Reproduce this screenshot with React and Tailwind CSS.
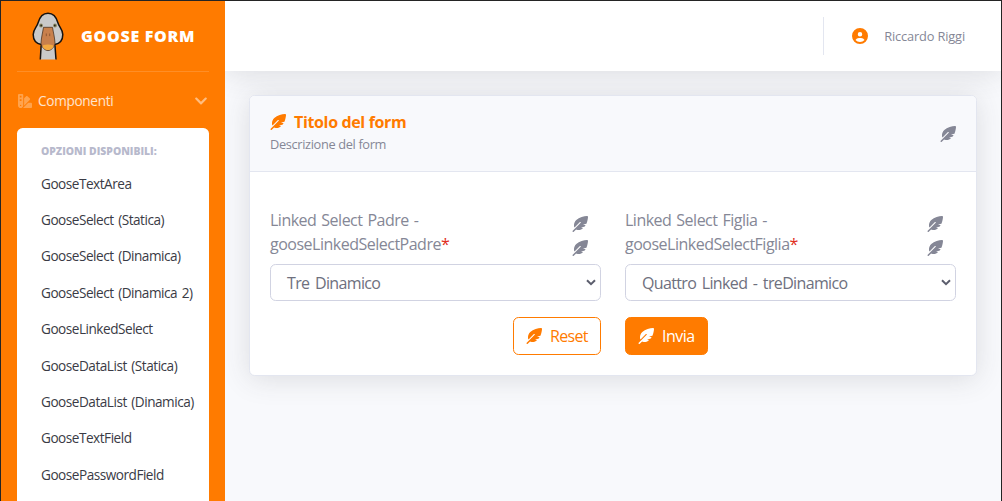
import { FaFeatherPointed, FaSwatchbook, FaCircleUser } from "react-icons/fa6";
import { FaChevronDown } from "react-icons/fa";

const options = [
  "GooseTextArea",
  "GooseSelect (Statica)",
  "GooseSelect (Dinamica)",
  "GooseSelect (Dinamica 2)",
  "GooseLinkedSelect",
  "GooseDataList (Statica)",
  "GooseDataList (Dinamica)",
  "GooseTextField",
  "GoosePasswordField",
];

function Goose() {
  return (
    <svg width="32" height="48" viewBox="0 0 32 48" className="shrink-0">
      <path
        d="M8.300 47.500 9.200 32.500C4 31.500 1.200 27.500 1.200 22.500 1.200 17.500 4.700 15.500 6 11 7.600 5 10.500 1.200 16 1.200S24.400 5 26 11c1.300 4.500 4.800 6.500 4.800 11.500 0 5-2.800 9-7.900 10L24 47.500"
        fill="#c9c9c9"
        stroke="#17120f"
        strokeWidth="1.500"
      />
      <path d="M11.500 15.300h9c.8 5 2.200 10 2.500 16-.5 3.800-3.900 7.300-7 7.300s-6.500-3.500-7-7.300c.3-6 1.700-11 2.500-16z" fill="#c8804c" stroke="#3a2617" strokeWidth=".7" />
      <path d="M16 32.400c3.600 0 5.500.9 5.500 1.600 0 1.800-3 4.100-5.500 4.100s-5.500-2.300-5.500-4.100c0-.7 1.900-1.600 5.500-1.600z" fill="#f3aa41" />
      <path d="M14.300 21.500v2.600M17.700 21.500v2.600" stroke="#8a5230" strokeWidth=".9" />
      <circle cx="9" cy="13.500" r="1.900" fill="#8d8a63" />
      <circle cx="23" cy="13.500" r="1.900" fill="#8d8a63" />
      <circle cx="9.200" cy="13.500" r=".9" fill="#2c2920" />
      <circle cx="22.800" cy="13.500" r=".9" fill="#2c2920" />
    </svg>
  );
}

function Sidebar() {
  return (
    <aside className="relative z-10 flex h-[500px] w-56 shrink-0 flex-col overflow-hidden bg-[#ff7b00] px-4">
      <div className="flex h-[70px] shrink-0 items-center pl-[15px]">
        <Goose />
        <span className="ml-[17px] whitespace-nowrap text-base font-extrabold tracking-[0.7px] text-white">GOOSE FORM</span>
      </div>
      <div className="h-px shrink-0 bg-white/15" />
      <div className="flex h-14 shrink-0 items-center pt-[2px]">
        <FaSwatchbook className="mr-[6px] ml-px size-[14px] text-white/30" />
        <span className="text-[13.600px] tracking-[-0.300px] text-white/80">Componenti</span>
        <FaChevronDown className="ml-auto mr-[1px] size-[14px] text-white/50" />
      </div>
      <div className="h-[420px] shrink-0 rounded-[5.600px] bg-white px-6 pt-[13.600px]">
        <h6 className="mb-[6px] whitespace-nowrap text-[10.400px] leading-[18px] font-extrabold text-[#b7b9cc]">
          OPZIONI DISPONIBILI:
        </h6>
        <ul>
          {options.map((name) => (
            <li
              key={name}
              className="flex h-[36.400px] items-center whitespace-nowrap text-[13.600px] tracking-[-0.480px] text-[#3a3b45] [word-spacing:1.500px]"
            >
              {name}
            </li>
          ))}
        </ul>
      </div>
    </aside>
  );
}

function SelectField({ label, name, value }) {
  return (
    <div>
      <div className="flex h-12 justify-between text-base leading-6 text-[#858796]">
        <div className="whitespace-nowrap tracking-[-0.500px] [word-spacing:1.300px]">
          <div>{label}</div>
          <div>
            {name}
            <span className="text-[#e02d1b]">*</span>
          </div>
        </div>
        <div className="mr-[13px] flex flex-col gap-2 pt-2">
          <FaFeatherPointed className="size-4" />
          <FaFeatherPointed className="size-4" />
        </div>
      </div>
      <div className="mt-2 flex h-[37px] items-center justify-between rounded-[5.600px] border border-[#d1d3e2] bg-white pr-[4px] pl-4 text-base tracking-[-0.640px] text-[#6e707e] [word-spacing:2px]">
        <span className="whitespace-nowrap">{value}</span>
        <svg width="10" height="7" viewBox="0 0 10 7" fill="none">
          <path d="m1 1.200 4 4 4-4" stroke="#5c5e6d" strokeWidth="2" />
        </svg>
      </div>
    </div>
  );
}

export default function App() {
  return (
    <div className="flex h-[501px] w-[1002px] overflow-hidden border-x border-t border-[#242424] bg-[#f8f9fc] font-['Open_Sans','Noto_Sans',sans-serif]">
      <Sidebar />
      <div className="flex min-w-0 flex-1 flex-col">
        <header className="flex h-[70px] shrink-0 items-center justify-end bg-white pr-9 shadow-[0_2.4px_28px_0_rgba(58,59,69,0.15)]">
          <div className="h-[38px] w-px bg-[#e3e6f0]" />
          <FaCircleUser className="ml-7 size-4 text-[#ff7b00]" />
          <span className="ml-4 whitespace-nowrap pt-px text-[12.800px] tracking-[-0.150px] text-[#858796]">Riccardo Riggi</span>
        </header>
        <main className="px-6 pt-6">
          <section className="h-[281px] overflow-hidden rounded-[5.600px] border border-[#e3e6f0] bg-white shadow-[0_2.4px_28px_0_rgba(58,59,69,0.15)]">
            <div className="flex h-[76px] items-center justify-between border-b border-[#e3e6f0] bg-[#f8f9fc] px-5">
              <div className="pb-[3px]">
                <div className="flex items-center text-[#ff7b00]">
                  <FaFeatherPointed className="mr-2 size-4" />
                  <h6 className="text-base leading-6 font-bold tracking-[-0.350px]">Titolo del form</h6>
                </div>
                <p className="text-[12.800px] leading-[20px] tracking-[-0.350px] text-[#858796]">Descrizione del form</p>
              </div>
              <FaFeatherPointed className="size-4 text-[#858796]" />
            </div>
            <div className="grid grid-cols-2 gap-x-6 gap-y-4 px-5 pt-9">
              <SelectField label="Linked Select Padre -" name="gooseLinkedSelectPadre" value="Tre Dinamico" />
              <SelectField label="Linked Select Figlia -" name="gooseLinkedSelectFiglia" value="Quattro Linked - treDinamico" />
              <button className="flex h-[38px] w-[88px] items-center justify-self-end rounded-[5.600px] border border-[#ff7b00] px-3 text-base tracking-[-0.650px] text-[#ff7b00]">
                <FaFeatherPointed className="mr-2 size-4 shrink-0" />
                Reset
              </button>
              <button className="flex h-[38px] w-[83px] items-center rounded-[5.600px] border border-[#ff7b00] bg-[#ff7b00] px-3 text-base tracking-[-0.500px] text-white">
                <FaFeatherPointed className="mr-2 size-4 shrink-0" />
                Invia
              </button>
            </div>
          </section>
        </main>
      </div>
    </div>
  );
}
